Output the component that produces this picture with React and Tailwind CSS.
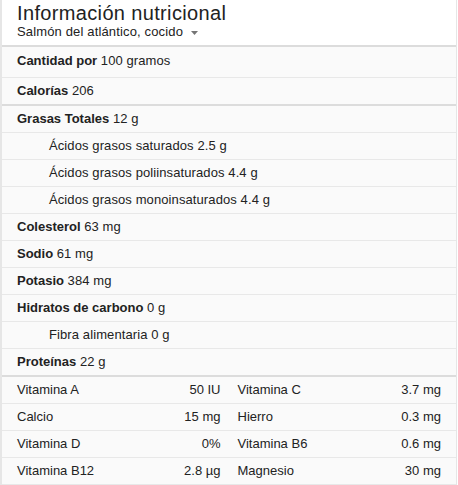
const fats = [
  { label: 'Ácidos grasos saturados', value: '2.5 g' },
  { label: 'Ácidos grasos poliinsaturados', value: '4.4 g' },
  { label: 'Ácidos grasos monoinsaturados', value: '4.4 g' },
];

const minerals = [
  { label: 'Colesterol', value: '63 mg' },
  { label: 'Sodio', value: '61 mg' },
  { label: 'Potasio', value: '384 mg' },
];

const vitamins = [
  ['Vitamina A', '50 IU', 'Vitamina C', '3.7 mg'],
  ['Calcio', '15 mg', 'Hierro', '0.3 mg'],
  ['Vitamina D', '0%', 'Vitamina B6', '0.6 mg'],
  ['Vitamina B12', '2.8 µg', 'Magnesio', '30 mg'],
];

const Row = ({ label, value, indent, thick, tall }) => (
  <div
    className={`px-[15px] ${tall ? 'pt-[6px] pb-[8px]' : 'py-[5px]'} leading-[16px] ${
      thick ? 'border-b-2 border-[#dcdcdc]' : 'border-b border-[#e8e8e8]'
    }`}
  >
    {indent ? (
      <span className="pl-[32px] tracking-[0.1px]">
        {label} {value}
      </span>
    ) : (
      <span>
        <span className="font-bold">{label}</span> <span className="tracking-[0.1px]">{value}</span>
      </span>
    )}
  </div>
);

export default function App() {
  return (
    <div
      className="w-[457px] bg-white text-[#222] text-[13px] border-l-2 border-r border-[#e6e6e6]"
      style={{ fontFamily: '"Liberation Sans", Arial, sans-serif' }}
    >
      <div className="bg-white px-[15px] pt-[2px] pb-[5px] border-b-2 border-[#dcdcdc]">
        <div className="text-[20px] leading-[22px] tracking-[0.35px]">Información nutricional</div>
        <div className="flex items-center leading-[16px]">
          <span className="tracking-[0.15px]">Salmón del atlántico, cocido</span>
          <svg className="ml-[8px] mt-[1px]" width="7" height="4" viewBox="0 0 7 4">
            <path d="M0 0 L7 0 L3.5 4 Z" fill="#757575" />
          </svg>
        </div>
      </div>

      <div className="bg-[#fafafa]">
        <Row label="Cantidad por" value="100 gramos" tall />
        <Row label="Calorías" value="206" thick />
        <Row label="Grasas Totales" value="12 g" />
        {fats.map(f => (
          <Row key={f.label} label={f.label} value={f.value} indent />
        ))}
        {minerals.map(m => (
          <Row key={m.label} label={m.label} value={m.value} />
        ))}
        <Row label="Hidratos de carbono" value="0 g" />
        <Row label="Fibra alimentaria" value="0 g" indent />
        <Row label="Proteínas" value="22 g" thick />

        {vitamins.map(v => (
          <div
            key={v[0]}
            className="flex gap-[17px] px-[15px] py-[5px] leading-[16px] border-b border-[#e8e8e8]"
          >
            <div className="flex-1 flex justify-between">
              <span>{v[0]}</span>
              <span>{v[1]}</span>
            </div>
            <div className="flex-1 flex justify-between">
              <span>{v[2]}</span>
              <span>{v[3]}</span>
            </div>
          </div>
        ))}
      </div>
    </div>
  );
}
